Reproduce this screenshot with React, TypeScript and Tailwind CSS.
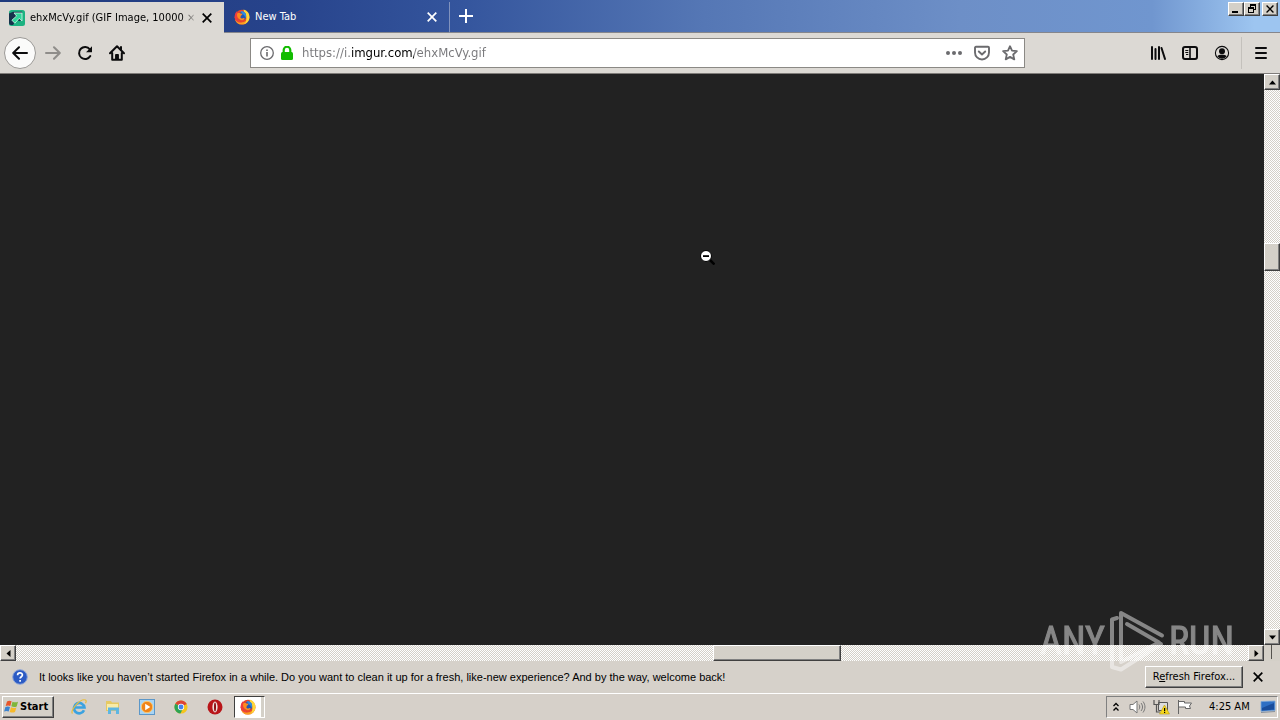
import type { ReactNode } from "react";

const ui = "font-['DejaVu_Sans_Condensed','DejaVu_Sans',sans-serif]";
const raised =
  "border border-t-white border-l-white border-r-[#404040] border-b-[#404040] bg-[#d4d0c8] shadow-[inset_-1px_-1px_0_#808080]";
const dither =
  "bg-[conic-gradient(#ffffff_25%,#d4d0c8_0_50%,#ffffff_0_75%,#d4d0c8_0)] bg-[length:2px_2px]";

function FirefoxLogo({ className = "size-4" }: { className?: string }) {
  return (
    <svg viewBox="0 0 16 16" className={className} aria-hidden="true">
      <circle cx="8" cy="8.200" r="7.400" fill="#e8452c" />
      <path d="M9.500 .6c3.900 1 6 4 6 7.500 0 4.200-3.300 7.500-7.400 7.500 2.500-1 4.300-3.300 4.300-6.400 0-3.600-2.500-4.600-2.900-8.600z" fill="#ffd83a" />
      <path d="M4 11.500c2 2.500 6 2.500 8.300-.2C12 14 10 15.600 7.500 15.600 4.500 15.500 2 13.500 1.200 11z" fill="#f9a01f" />
      <path d="M.7 8.500C.5 5.500 1.500 3.600 3 2.300c-.2 1 0 1.700.4 2.200l-.2 5.200c1 2.500 3 3.500 5 3.300-2 1.200-4.500.6-6-1.200z" fill="#ee3d3f" />
      <circle cx="8.200" cy="6.900" r="4" fill="#2456b4" />
      <path d="M6.500 2c2.500-.3 4.700 1 5.400 3.300.3 1.400 0 2.700-.7 3.600-.2-1.800-1-3.300-2.700-4z" fill="#2f8de0" />
      <path d="M3.200 4.400c1.200-.5 2.300-.4 3.300.1 1.300 0 1.800.4 1.900.9 0 .5-1.400.8-1.600 1.300-.2.7 0 1.200-.6 1.500.9 1.600 2.400 1.400 3.600.9.800 0 .9.600.4 1.100-1.300 1.400-4 1.200-5.500-.4C3.300 8.600 2.700 6.200 3.200 4.400z" fill="#ff8a1e" />
    </svg>
  );
}

function Cross({ className = "size-[10px]" }: { className?: string }) {
  return (
    <svg viewBox="0 0 10 10" className={className} fill="none" stroke="currentColor" strokeWidth="1.700" aria-hidden="true">
      <path d="M.7.7l8.600 8.600M9.300.7L.7 9.300" />
    </svg>
  );
}

function Arrow({ dir }: { dir: "up" | "down" | "left" | "right" }) {
  const d = {
    up: "M0 5.500h7L3.500 1.500z",
    down: "M0 1.500h7L3.500 5.500z",
    left: "M5.500 0v7L1.500 3.500z",
    right: "M1.500 0v7l4-3.500z",
  }[dir];
  return (
    <svg viewBox="0 0 7 7" className="size-[7px]" aria-hidden="true">
      <path d={d} />
    </svg>
  );
}

function ScrollButton({ dir }: { dir: "up" | "down" | "left" | "right" }) {
  return (
    <button type="button" aria-label={`Scroll ${dir}`} className={`flex size-4 shrink-0 items-center justify-center ${raised}`}>
      <Arrow dir={dir} />
    </button>
  );
}

function ToolButton({ label, className = "w-8", children }: { label: string; className?: string; children: ReactNode }) {
  return (
    <button type="button" aria-label={label} className={`flex h-8 shrink-0 items-center justify-center ${className}`}>
      {children}
    </button>
  );
}

function TitleBar() {
  const control = `flex h-[14px] w-4 items-center justify-center ${raised}`;
  return (
    <header className="flex h-[33px] shrink-0 border-b border-[#85868c] bg-[linear-gradient(90deg,#1f3a7d_0%,#27438b_22%,#34559d_36%,#5577b5_55%,#6d8fc7_75%,#7096cf_90%,#9dc5f0_98%)]">
      <div className="mt-[2px] -mb-px flex w-56 items-center bg-[#dcd9d4] pl-[9px]">
        <svg viewBox="0 0 16 16" className="size-4 shrink-0" aria-hidden="true">
          <rect width="16" height="16" rx="2.500" fill="#1cb281" />
          <path d="M0 3.500l4-1.800h9v8.500l-3 1-2-2-4 5.800H2a2 2 0 0 1-2-2z" fill="#17324c" />
          <path d="M5 3h8v8l-2.800-2.600-4.400 4.800-2.900-3L7.600 6z" fill="#2fd59a" stroke="#d5f8e9" strokeWidth=".8" />
        </svg>
        <span className="ml-[5px] flex-1 bg-[linear-gradient(90deg,#000_151px,transparent_168px)] bg-clip-text text-[11px] leading-4 whitespace-nowrap text-transparent">
          ehxMcVy.gif (GIF Image, 10000 ×
        </span>
        <button type="button" aria-label="Close tab" className="mr-3">
          <Cross />
        </button>
      </div>
      <div className="mt-[2px] -mb-px flex w-[226px] items-center border-r border-b border-r-[#8092bd] border-b-[#85868c] pl-[10px] text-white">
        <FirefoxLogo className="size-4 shrink-0" />
        <span className="ml-[5px] flex-1 text-[11px] leading-4">New Tab</span>
        <button type="button" aria-label="Close tab" className="mr-3">
          <Cross />
        </button>
      </div>
      <button type="button" aria-label="New tab" className="flex w-8 items-center justify-center text-white">
        <svg viewBox="0 0 14 14" className="size-[14px]" stroke="currentColor" strokeWidth="2" aria-hidden="true">
          <path d="M7 0v14M0 7h14" />
        </svg>
      </button>
      <div className="mt-[2px] mr-[2px] ml-auto flex h-[14px]">
        <button type="button" aria-label="Minimize" className={control}>
          <svg viewBox="0 0 10 10" className="size-[10px]" aria-hidden="true">
            <path d="M1 7h6v2H1z" />
          </svg>
        </button>
        <button type="button" aria-label="Restore" className={control}>
          <svg viewBox="0 0 10 10" className="size-[10px]" aria-hidden="true">
            <path d="M3 0h6v6H7V5h1V2H4v1H3zM1 3h6v6H1zm1 2v3h4V5z" fillRule="evenodd" />
          </svg>
        </button>
        <button type="button" aria-label="Close" className={`ml-[2px] ${control}`}>
          <Cross className="size-2" />
        </button>
      </div>
    </header>
  );
}

function Toolbar() {
  return (
    <nav className="flex h-[41px] shrink-0 items-center border-b border-[#7f7c79] bg-[#dcd9d4]">
      <button
        type="button"
        aria-label="Back"
        className="ml-1 flex size-8 shrink-0 items-center justify-center rounded-full border border-[#9b9996] bg-[#fbfbfa]"
      >
        <svg viewBox="0 0 16 16" className="size-4" fill="none" stroke="#0c0c0d" strokeWidth="2" strokeLinecap="round" strokeLinejoin="round" aria-hidden="true">
          <path d="M15 8H1.500M7 2.200L1.200 8 7 13.800" />
        </svg>
      </button>
      <ToolButton label="Forward" className="ml-px w-8">
        <svg viewBox="0 0 16 16" className="size-4" fill="none" stroke="#8f8d8a" strokeWidth="2" strokeLinecap="round" strokeLinejoin="round" aria-hidden="true">
          <path d="M1 8h13.500M9 2.200L14.800 8 9 13.800" />
        </svg>
      </ToolButton>
      <ToolButton label="Reload">
        <svg viewBox="0 0 16 16" className="size-4" aria-hidden="true">
          <path d="M13.300 11A6 6 0 1 1 12.800 4.300" fill="none" stroke="#0c0c0d" strokeWidth="2" strokeLinecap="round" />
          <path d="M15 1.200v5.500a.6.6 0 0 1-.6.600H9z" fill="#0c0c0d" />
        </svg>
      </ToolButton>
      <ToolButton label="Home">
        <svg viewBox="0 0 16 16" className="size-4" fill="none" stroke="#0c0c0d" strokeWidth="2" strokeLinecap="round" strokeLinejoin="round" aria-hidden="true">
          <path d="M1 8.200L8 1.300l7 6.900M3.200 8v6.800h9.600V8" />
          <path d="M6.600 14V9.500h2.800V14z" fill="#0c0c0d" strokeWidth="1" />
          <path d="M12 2v2.500" />
        </svg>
      </ToolButton>
      <div className="mx-[117px] flex h-[30px] min-w-0 flex-1 items-center border border-[#8b8985] bg-white text-[#6b6b6e]">
        <button type="button" aria-label="Site information" className="ml-[9px]">
          <svg viewBox="0 0 14 14" className="size-[14px]" aria-hidden="true">
            <circle cx="7" cy="7" r="6.300" fill="none" stroke="currentColor" strokeWidth="1.300" />
            <path d="M6.200 6h1.600v4.500H6.200zM6.200 3.400h1.600V5H6.200z" fill="currentColor" />
          </svg>
        </button>
        <svg viewBox="0 0 12 14" className="mx-[7px] h-[14px] w-3 shrink-0" aria-hidden="true">
          <rect y="6" width="12" height="8" rx="1.500" fill="#12bc00" />
          <path d="M2.700 7V4a3.300 3.300 0 0 1 6.600 0v3" fill="none" stroke="#12bc00" strokeWidth="2.200" />
        </svg>
        <input
          type="text"
          aria-label="Address"
          defaultValue="https://i.imgur.com/ehxMcVy.gif"
          className="ml-[2px] min-w-0 flex-1 bg-[linear-gradient(90deg,#77777a_50px,#000_50px_112px,#77777a_112px)] bg-clip-text text-[13px] leading-5 text-transparent outline-none"
        />
        <button type="button" aria-label="Page actions" className="flex w-7 justify-center">
          <svg viewBox="0 0 16 4" className="h-1 w-4" fill="currentColor" aria-hidden="true">
            <circle cx="2" cy="2" r="2" />
            <circle cx="8" cy="2" r="2" />
            <circle cx="14" cy="2" r="2" />
          </svg>
        </button>
        <button type="button" aria-label="Save to Pocket" className="flex w-7 justify-center">
          <svg viewBox="0 0 16 16" className="size-4" fill="none" stroke="currentColor" strokeWidth="1.900" strokeLinecap="round" strokeLinejoin="round" aria-hidden="true">
            <path d="M1 2.800c0-.6.400-1 1-1h12c.6 0 1 .4 1 1V7.500a7 7 0 0 1-14 0z" />
            <path d="M4.800 6.500L8 9.500l3.200-3" />
          </svg>
        </button>
        <button type="button" aria-label="Bookmark" className="flex w-7 justify-center">
          <svg viewBox="0 0 16 16" className="size-4" fill="none" stroke="currentColor" strokeWidth="1.800" strokeLinejoin="round" aria-hidden="true">
            <path d="M8 1.200l2 4.500 4.900.5-3.700 3.300 1.100 4.900L8 11.900l-4.300 2.500 1.100-4.900L1.100 6.200 6 5.700z" />
          </svg>
        </button>
      </div>
      <ToolButton label="Library">
        <svg viewBox="0 0 16 16" className="size-4" fill="none" stroke="#0c0c0d" strokeWidth="2" strokeLinecap="round" aria-hidden="true">
          <path d="M2 2v12M5.500 4v10M9 2v12M11.500 3l3.500 11" />
        </svg>
      </ToolButton>
      <ToolButton label="Sidebars">
        <svg viewBox="0 0 16 16" className="size-4" fill="none" stroke="#0c0c0d" aria-hidden="true">
          <rect x="1" y="2" width="14" height="12" rx="2" strokeWidth="2" />
          <path d="M8 2v12" strokeWidth="1.600" />
          <path d="M3.300 5.500h3M3.300 7.500h3M4 9.500h2.300" />
        </svg>
      </ToolButton>
      <ToolButton label="Account">
        <svg viewBox="0 0 16 16" className="size-4" aria-hidden="true">
          <circle cx="8" cy="8" r="6.600" fill="none" stroke="#0c0c0d" strokeWidth="1.100" />
          <circle cx="8" cy="6.300" r="3" fill="#0c0c0d" />
          <path d="M3.300 11.300c1-1.600 2.300-1.600 4.700-1.600s3.700 0 4.700 1.600A5.600 5.600 0 0 1 8 13.700a5.600 5.600 0 0 1-4.700-2.400z" fill="#0c0c0d" />
        </svg>
      </ToolButton>
      <div className="ml-[3px] h-8 w-px bg-[#c4c1bc]" />
      <ToolButton label="Menu" className="mr-[3px] ml-[3px] w-8">
        <svg viewBox="0 0 12 12" className="size-3" stroke="#0c0c0d" strokeWidth="2" strokeLinecap="round" aria-hidden="true">
          <path d="M1 1h10M1 6h10M1 11h10" />
        </svg>
      </ToolButton>
    </nav>
  );
}

function Watermark() {
  const word =
    "font-['Liberation_Sans_Narrow','Roboto_Condensed','Roboto',sans-serif] text-[38px] leading-none [-webkit-text-stroke:1px_white]";
  return (
    <div className="pointer-events-none absolute right-[46px] bottom-[48px] flex items-center text-white opacity-45">
      <span className={word}>ANY</span>
      <svg viewBox="0 0 56 62" className="mx-1 h-[62px] w-14" fill="none" stroke="currentColor" strokeWidth="4" strokeLinejoin="round" strokeLinecap="round" aria-hidden="true">
        <path d="M8 8L3 9.500V57l9 2.500L52 34M12 49V3l41 22.500M18 14l32 18.500L12 52" />
      </svg>
      <span className={word}>RUN</span>
    </div>
  );
}

function Viewport() {
  return (
    <main className="flex min-h-0 flex-1 flex-col">
      <div className="flex min-h-0 flex-1">
        <div className="relative flex-1 bg-[#222222]">
          <svg viewBox="0 0 16 16" className="absolute top-[175px] left-[699px] size-4" aria-hidden="true">
            <path d="M10.500 10.500l5 5" stroke="#000" strokeWidth="2.500" />
            <circle cx="7" cy="7" r="5.500" fill="#fff" stroke="#000" />
            <path d="M4 6.200h6v1.800H4z" />
          </svg>
        </div>
        <div className={`flex w-4 flex-col ${dither}`}>
          <ScrollButton dir="up" />
          <div className="grow-[153]" />
          <div className={`h-7 ${raised}`} />
          <div className="grow-[358]" />
          <ScrollButton dir="down" />
        </div>
      </div>
      <div className="flex h-4 shrink-0 bg-[#d4d0c8]">
        <div className={`flex flex-1 ${dither}`}>
          <ScrollButton dir="left" />
          <div className="grow-[697]" />
          <div className={`w-32 ${raised}`} />
          <div className="grow-[407]" />
          <ScrollButton dir="right" />
        </div>
        <div className="mr-2 ml-[7px] h-[14px] w-px bg-[#55524e]" />
      </div>
    </main>
  );
}

function Notification() {
  return (
    <section className="flex h-8 shrink-0 items-center bg-[#d6d1ca]">
      <svg viewBox="0 0 16 16" className="ml-3 size-4 shrink-0" aria-hidden="true">
        <circle cx="8" cy="8" r="7.300" fill="#2c5bc4" stroke="#8fa6d8" />
        <path d="M5.600 6.200C5.600 3.200 10.400 3.200 10.400 6c0 1.700-2.300 1.800-2.300 3.600M8.100 11v1.700" fill="none" stroke="#fff" strokeWidth="1.700" />
      </svg>
      <p className="ml-[11px] flex-1 font-['Liberation_Sans',sans-serif] text-[11px] leading-4 whitespace-nowrap">
        It looks like you haven’t started Firefox in a while. Do you want to clean it up for a fresh, like-new experience? And by the way, welcome back!
      </p>
      <button type="button" className={`h-[22px] w-[98px] text-[11px] leading-4 whitespace-nowrap ${raised}`}>
        R<u>e</u>fresh Firefox...
      </button>
      <button type="button" aria-label="Dismiss" className="mr-[17px] ml-[10px]">
        <Cross />
      </button>
    </section>
  );
}

function Taskbar() {
  const item = "flex h-[22px] w-[30px] items-center justify-center";
  return (
    <footer className="flex h-[27px] shrink-0 items-center border-t border-white bg-[#d6d0c9]">
      <button type="button" className={`ml-[2px] flex h-[22px] w-[52px] items-center text-[11px] font-bold ${raised}`}>
        <svg viewBox="0 0 17 16" className="h-4 w-[17px] shrink-0" aria-hidden="true">
          <path d="M4 2.500c1.500-1 3-1 4.600-.2L7.300 7C5.800 6.300 4.300 6.300 2.700 7z" fill="#e8562a" />
          <path d="M9.500 2.700c1.800.8 3.500.9 5.500 0L13.700 7.400c-1.800.8-3.600.7-5.400-.1z" fill="#7fb63c" />
          <path d="M2.400 8c1.600-.8 3.100-.8 4.600 0l-1.300 4.500c-1.500-.7-3-.7-4.600 0z" fill="#3c83cf" />
          <path d="M8 8.300c1.800.8 3.600.9 5.400.1L12 13c-1.700.8-3.500.7-5.300 0z" fill="#f6b92b" />
        </svg>
        Start
      </button>
      <div className="ml-[10px] flex gap-[4px]">
        <button type="button" aria-label="Internet Explorer" className={item}>
          <svg viewBox="0 0 16 16" className="size-4" fill="none" aria-hidden="true">
            <path d="M13 11.300A5.200 5.200 0 1 1 13.400 8.500H4" stroke="#3ba2e0" strokeWidth="2.700" />
            <path d="M1.500 14.500C-1.500 12 9-1 14.500 1c1 .6.700 2 0 3.300" stroke="#e8bd3c" strokeWidth="1.200" />
          </svg>
        </button>
        <button type="button" aria-label="File Explorer" className={item}>
          <svg viewBox="0 0 16 16" className="size-4" aria-hidden="true">
            <path d="M1 2h5l1 1.500h7V12H1z" fill="#e6c963" />
            <path d="M2 5h11v6H2z" fill="#f8eba8" />
            <path d="M3 8.500h11V15h-3v-3.500H6V15H3z" fill="#5eb6e2" />
          </svg>
        </button>
        <button type="button" aria-label="Media Player" className={item}>
          <svg viewBox="0 0 16 16" className="size-4" aria-hidden="true">
            <rect x=".5" y=".5" width="15" height="15" fill="#a9d4f3" stroke="#5c97c8" />
            <circle cx="8" cy="8" r="5.700" fill="#f08418" stroke="#fbc873" />
            <path d="M6.200 4.800v6.400L11.300 8z" fill="#fff" />
          </svg>
        </button>
        <button type="button" aria-label="Chrome" className={item}>
          <svg viewBox="0 0 16 16" className="size-[14px]" aria-hidden="true">
            <circle cx="8" cy="8" r="7.500" fill="#f5c51c" />
            <path d="M8 8L1.500 4.200A7.500 7.500 0 0 1 14.500 4.500z" fill="#dd4437" />
            <path d="M1.500 4.200A7.500 7.500 0 0 0 7.300 15.500L10.500 9.500 8 8z" fill="#2da355" />
            <circle cx="8" cy="8" r="3.600" fill="#fff" />
            <circle cx="8" cy="8" r="2.800" fill="#4582ec" />
          </svg>
        </button>
        <button type="button" aria-label="Opera" className={item}>
          <svg viewBox="0 0 16 16" className="size-4" aria-hidden="true">
            <circle cx="8" cy="8" r="7.500" fill="#b91519" />
            <ellipse cx="8" cy="8" rx="2.600" ry="5.400" fill="#f0e2df" />
            <ellipse cx="8" cy="8" rx="1" ry="4.500" fill="#8b0f13" />
          </svg>
        </button>
        <button
          type="button"
          aria-label="Firefox"
          className="flex h-[22px] w-[31px] items-center border border-t-[#404040] border-r-white border-b-white border-l-[#404040] bg-[#d4d0c8]"
        >
          <span className="flex h-5 w-[26px] items-center justify-center bg-white">
            <FirefoxLogo />
          </span>
        </button>
      </div>
      <div className="mr-[2px] ml-auto flex h-[22px] items-center border border-t-[#808080] border-r-white border-b-white border-l-[#808080] pl-[5px]">
        <button type="button" aria-label="Show hidden icons">
          <svg viewBox="0 0 8 10" className="h-[10px] w-2" fill="none" stroke="#000" strokeWidth="1.300" aria-hidden="true">
            <path d="M1.500 4L4 1.500 6.500 4M1.500 8.500L4 6l2.500 2.500" />
          </svg>
        </button>
        <svg viewBox="0 0 17 16" className="ml-[9px] h-4 w-[17px]" fill="none" stroke="#777" aria-hidden="true">
          <path d="M1 5.500h3l4-3.500v12l-4-3.500H1z" fill="#fff" />
          <path d="M10 5.500c1 1.500 1 3.500 0 5M12 4c2 2.500 2 5.500 0 8M14 2.500c2.600 3.500 2.600 7.500 0 11" />
        </svg>
        <svg viewBox="0 0 17 16" className="ml-[7px] h-4 w-[17px]" aria-hidden="true">
          <path d="M5.500 3.500h9v8h-9z" fill="#ddd" stroke="#555" />
          <path d="M1 1v4.500h5V1M3.500 5.500V13H7" fill="none" stroke="#555" strokeWidth="1.200" />
          <path d="M11.500 6l5 9h-10z" fill="#f8d81c" stroke="#b79b14" strokeWidth=".6" />
          <path d="M11 9h1.200v3H11zM11 12.800h1.200V14H11z" />
        </svg>
        <svg viewBox="0 0 16 16" className="ml-[7px] size-4" fill="#fff" stroke="#666" aria-hidden="true">
          <path d="M1.500 1v14M1.500 2.500h6v1.500h7l-2 3 1 2.500h-5V8h-7z" />
        </svg>
        <time className="ml-4 w-[43px] text-[11px] leading-4 whitespace-nowrap">4:25 AM</time>
        <button type="button" aria-label="Show desktop" className="mr-px ml-[8px]">
          <svg viewBox="0 0 16 14" className="h-[14px] w-4" aria-hidden="true">
            <path d="M1 1.500l14-.5v9.500l-14 .8z" fill="#2e6fc4" stroke="#7fa8d8" strokeWidth=".8" />
            <path d="M2 8l12-5v6.500L2 10.500z" fill="#194d9c" />
            <path d="M1 12.500l14-1" stroke="#89919c" />
          </svg>
        </button>
      </div>
    </footer>
  );
}

export default function App() {
  return (
    <div className={`relative flex h-screen flex-col overflow-hidden text-black ${ui}`}>
      <TitleBar />
      <Toolbar />
      <Viewport />
      <Notification />
      <Taskbar />
      <Watermark />
    </div>
  );
}
